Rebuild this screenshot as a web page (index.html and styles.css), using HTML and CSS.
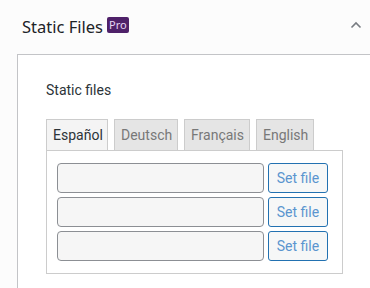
FILE: index.html
```html
<!DOCTYPE html>
<html lang="en">
<head>
  <meta charset="UTF-8" />
  <title>Static Files</title>
  <link rel="stylesheet" href="styles.css">
</head>
<body>
  <div class="box-header">
    <h2>Static Files <span class="pro">Pro</span></h2>
    <svg class="toggle" width="12" height="8" viewBox="0 0 12 8"><path d="M1.5 6.5 L6 2 L10.5 6.5" fill="none" stroke="#787c82" stroke-width="1.6"/></svg>
  </div>
  <div class="panel">
    <p class="label">Static files</p>
    <div class="tabs">
      <span class="tab active">Español</span>
      <span class="tab">Deutsch</span>
      <span class="tab">Français</span>
      <span class="tab">English</span>
    </div>
    <div class="tab-body">
      <div class="file-row"><input type="text"><button>Set file</button></div>
      <div class="file-row"><input type="text"><button>Set file</button></div>
      <div class="file-row"><input type="text"><button>Set file</button></div>
    </div>
  </div>
</body>
</html>
```
FILE: styles.css
```css
* { box-sizing: border-box; margin: 0; padding: 0; }
html, body { background: #fcfcfc; font-family: Roboto, sans-serif; color: #2c3338; overflow: hidden; }
.box-header { height: 54px; display: flex; align-items: center; justify-content: space-between; padding: 0 8px 0 22px; }
.box-header h2 { font-family: 'Noto Sans', sans-serif; font-weight: 400; font-size: 16.5px; color: #1d2327; display: flex; align-items: flex-end; margin-top: -2px; }
.pro { display: inline-block; background: #4f2169; color: #e6d4f2; font-size: 11px; line-height: 16px; height: 16px; padding: 0 2px; border-radius: 2px; margin-left: 4px; margin-bottom: 5px; font-family: 'Noto Sans', sans-serif; }
.toggle { margin-top: -4px; }
.panel { margin-left: 17px; background: #fff; border-top: 1px solid #c3c4c7; border-left: 1px solid #c3c4c7; height: 240px; padding: 26px 0 0 28px; }
.label { font-size: 14px; color: #2c3338; line-height: 18px; margin-bottom: 20px; }
.tabs { display: flex; gap: 6px; height: 31px; }
.tab { border: 1px solid #cccccc; border-bottom: none; background: #e5e5e5; color: #787878; font-size: 14px; padding: 0 6px; line-height: 30px; }
.tab.active { background: #f4f4f4; color: #2c3338; height: 31px; margin-bottom: -1px; position: relative; }
.tab:nth-child(1) { width: 62px; }
.tab:nth-child(2) { width: 64px; }
.tab:nth-child(3) { width: 66px; }
.tab:nth-child(4) { width: 58px; }
.tab-body { width: 297px; border: 1px solid #cccccc; background: #fff; padding: 12px 14px 12px 10px; display: flex; flex-direction: column; gap: 4px; }
.file-row { display: flex; gap: 4px; }
.file-row input { width: 207px; height: 30px; border: 1px solid #8c8f94; border-radius: 4px; background: #f6f6f6; }
.file-row button { width: 60px; height: 30px; border: 1px solid #2271b1; border-radius: 3px; background: #f6f7f7; color: #5a95cf; font-family: Roboto, sans-serif; font-size: 14px; }
```
